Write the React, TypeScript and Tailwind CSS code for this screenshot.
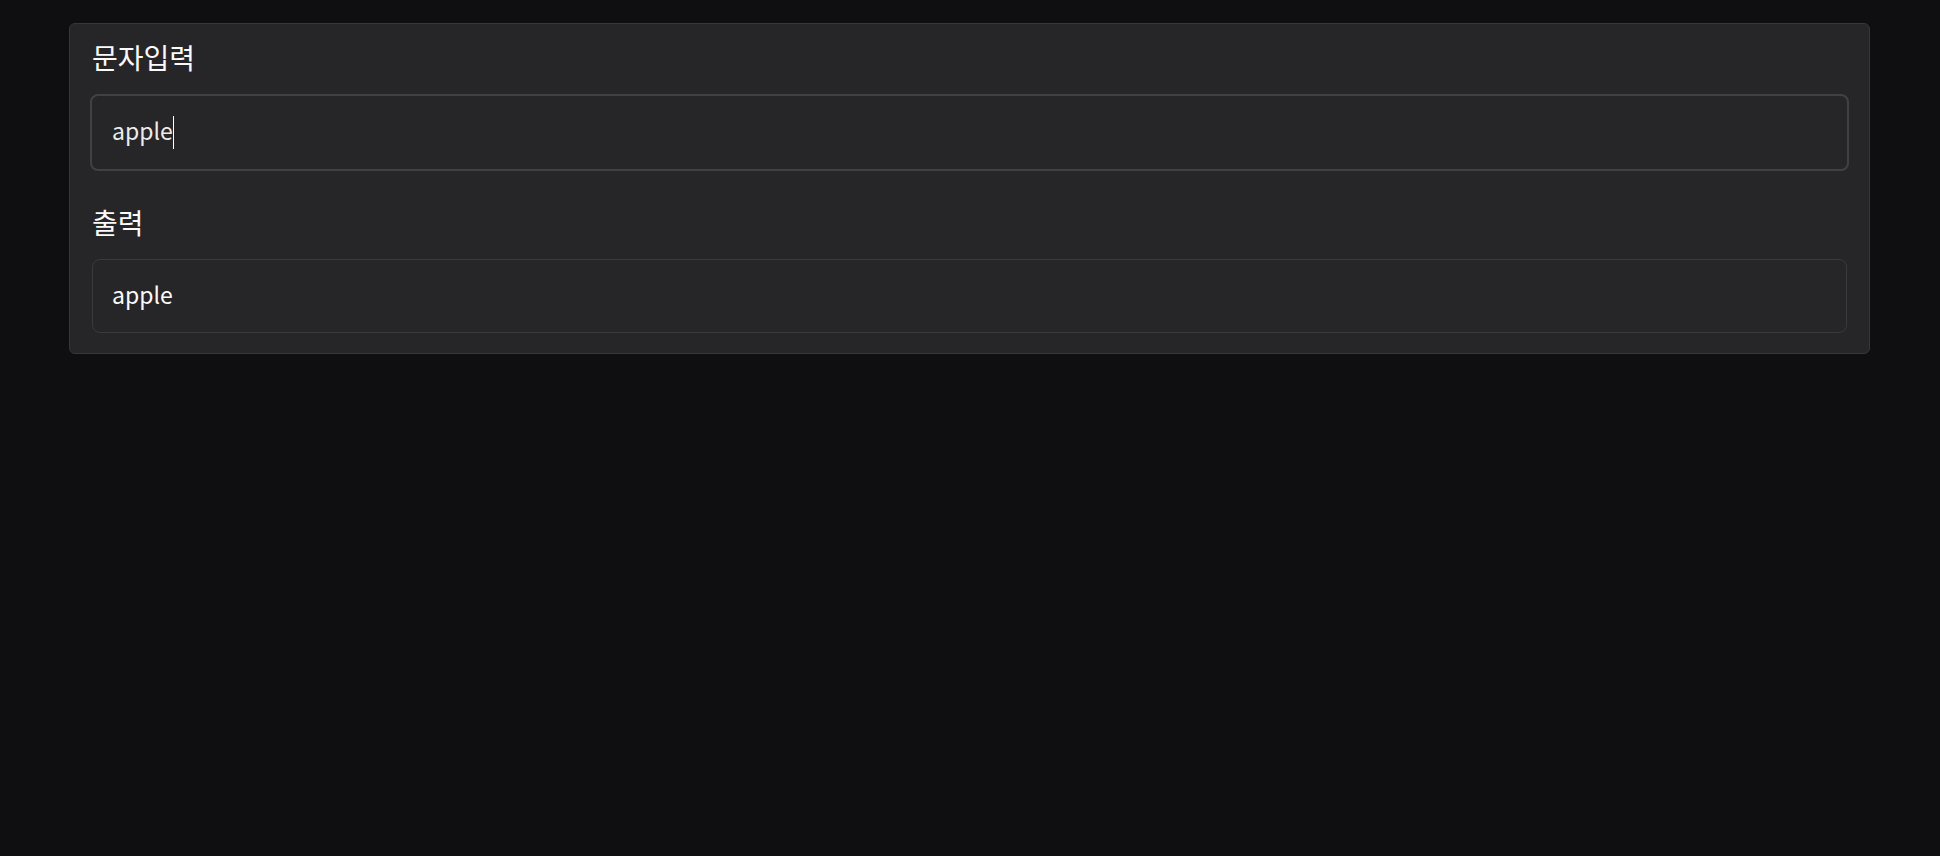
import { useState } from "react";

const FONT = { fontFamily: '"Noto Sans CJK KR", "Noto Sans", sans-serif' };

function Field({ label, children }: { label: string; children: React.ReactNode }) {
  return (
    <div>
      <div className="h-[50px] pl-[2px] text-[28px] leading-[26px] text-[#fafafa]">{label}</div>
      {children}
    </div>
  );
}

export default function App() {
  const [value] = useState("apple");

  return (
    <div className="min-h-[856px] bg-[#0f0f11] pt-[23px] pl-[69px] pr-[70px]" style={FONT}>
      <div className="rounded-md border border-[#37373b] bg-[#262629] p-5">
        {/* Text input */}
        <Field label="문자입력">
          <div className="flex h-[77px] items-center rounded-lg border-2 border-[#404046] bg-[#262629] px-5 pb-[4px]">
            <span className="text-[23px] leading-none text-[#ececec]">{value}</span>
            <span className="mt-[3px] h-[33px] w-px bg-white" />
          </div>
        </Field>

        {/* Output */}
        <div className="mt-[38px]">
          <Field label="출력">
            <div className="mx-[2px] flex h-[74px] items-center rounded-lg border border-[#3a3a3e] bg-[#262629] px-[19px] pb-[4px]">
              <span className="text-[23px] leading-none text-[#fafafa]">{value}</span>
            </div>
          </Field>
        </div>
      </div>
    </div>
  );
}
